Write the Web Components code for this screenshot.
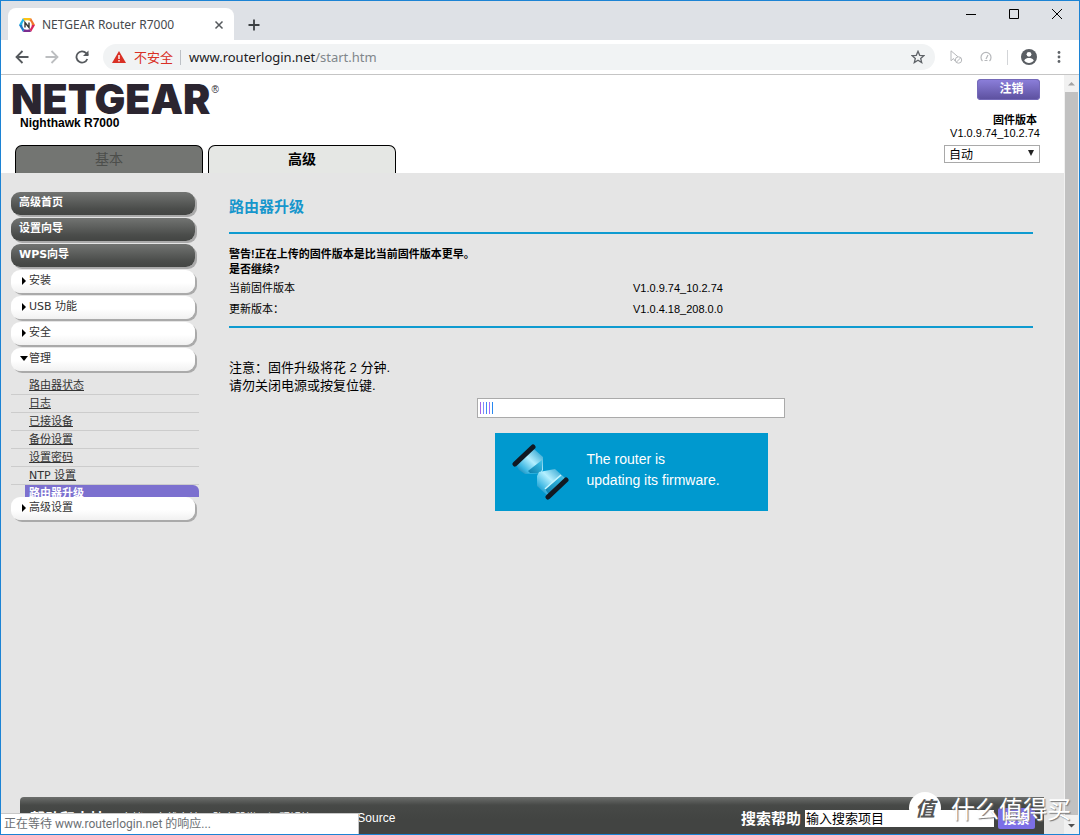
<!DOCTYPE html>
<html lang="zh-CN">
<head>
<meta charset="utf-8">
<title>NETGEAR Router R7000</title>
<style>
  html, body { height: 100%; margin: 0; }
  body { font: 12px/15px "Liberation Sans", "Noto Sans CJK SC", sans-serif; color: #000; overflow: hidden; }
</style>
</head>
<body>
<browser-window>
  <tab-strip slot="tabs" label="NETGEAR Router R7000"></tab-strip>
  <address-bar slot="toolbar" host="www.routerlogin.net" path="/start.htm"></address-bar>
  <router-page>
    <router-header slot="header"></router-header>
    <side-menu slot="menu">
      <menu-button tone="dark">高级首页</menu-button>
      <menu-button tone="dark">设置向导</menu-button>
      <menu-button tone="dark">WPS向导</menu-button>
      <menu-button arrow="right">安装</menu-button>
      <menu-button arrow="right">USB 功能</menu-button>
      <menu-button arrow="right">安全</menu-button>
      <menu-button arrow="down">管理</menu-button>
      <sub-menu></sub-menu>
      <menu-button arrow="right">高级设置</menu-button>
    </side-menu>
    <upgrade-panel></upgrade-panel>
    <help-footer slot="footer"></help-footer>
  </router-page>
  <status-bubble slot="status">正在等待 www.routerlogin.net 的响应...</status-bubble>
</browser-window>
<site-watermark></site-watermark>

<script>
const define = (name, html) => customElements.define(name, class extends HTMLElement {
  constructor() {
    super();
    const t = document.createElement('template');
    t.innerHTML = typeof html === 'function' ? html(this) : html;
    this.attachShadow({ mode: 'open' }).append(t.content.cloneNode(true));
  }
});

define('browser-window', `
<style>
  :host { display: flex; flex-direction: column; position: relative; height: 100%; box-sizing: border-box; border: 1px solid #1c83d4; background: #fff; }
  .view { flex: 1; min-height: 0; display: flex; border-top: 1px solid #c5c5c5; }
  .content { flex: 1; min-width: 0; display: flex; }
  .bar { width: 15px; background: #f1f1f1; display: flex; flex-direction: column; align-items: center; }
  .bar svg { width: 15px; height: 17px; }
  .thumb { width: 13px; flex: 1; background: #c1c1c1; }
  .rest { height: 2px; }
  .status { position: absolute; left: 0; bottom: 0; }
</style>
<slot name="tabs"></slot>
<slot name="toolbar"></slot>
<div class="view">
  <div class="content"><slot></slot></div>
  <div class="bar">
    <svg viewBox="0 0 15 17"><path d="M4 10.500 7.500 7 11 10.500z" fill="#a3a3a3"/></svg>
    <div class="thumb"></div><div class="rest"></div>
    <svg viewBox="0 0 15 17"><path d="M4 7 7.500 10.500 11 7z" fill="#505050"/></svg>
  </div>
</div>
<div class="status"><slot name="status"></slot></div>`);

define('tab-strip', el => `
<style>
  :host { display: flex; height: 39px; flex: none; background: #dee1e6; font: 12px/16px "Noto Sans", sans-serif; color: #45494d; }
  .tab { display: flex; align-items: center; box-sizing: border-box; width: 226px; height: 32px; margin: 7px 0 0 7px; padding: 2px 10px 0 11px; gap: 7px; background: #fff; border-radius: 8px 8px 0 0; }
  .tab span { flex: 1; }
  button { border: 0; padding: 0; background: none; display: grid; place-items: center; }
  .new { width: 40px; height: 47px; }
  .win { margin: 0 1px 0 auto; display: flex; }
  .win button { width: 43px; height: 26px; }
</style>
<div class="tab">
  <svg width="16" height="16" viewBox="0 0 16 16"><path d="M4 1 8 8 0 8z" fill="#20b4e8"/><path d="M0 8h8l-4 7z" fill="#1e78c8"/><path d="M4 1h8L8 8z" fill="#fbc318"/><path d="M12 1l4 7H8z" fill="#f0742c"/><path d="M16 8l-4 7-4-7z" fill="#d8255d"/><path d="M12 15H4l4-7z" fill="#7b2d90"/><circle cx="8" cy="8" r="4.800" fill="#fff"/><path d="M6 10.500v-5l4 5v-5" fill="none" stroke="#333" stroke-width="1.400"/></svg>
  <span>${el.getAttribute('label')}</span>
  <button aria-label="关闭标签页"><svg width="10" height="10" viewBox="0 0 10 10"><path d="M1.500 1.500l7 7m0-7l-7 7" stroke="#55595d" stroke-width="1.500"/></svg></button>
</div>
<button class="new" aria-label="新标签页"><svg width="12" height="12" viewBox="0 0 12 12"><path d="M6 .5v11M.5 6h11" stroke="#3c4043" stroke-width="1.800"/></svg></button>
<div class="win">
  <button aria-label="最小化"><svg width="10" height="10" viewBox="0 0 10 10"><path d="M0 5.500h10" stroke="#000"/></svg></button>
  <button aria-label="最大化"><svg width="10" height="10" viewBox="0 0 10 10"><path d="M.5.5h9v9h-9z" fill="none" stroke="#000"/></svg></button>
  <button aria-label="关闭"><svg width="10" height="10" viewBox="0 0 10 10"><path d="M0 0l10 10m0-10L0 10" stroke="#000"/></svg></button>
</div>`);

define('address-bar', el => `
<style>
  :host { display: flex; align-items: center; height: 34px; flex: none; padding: 0 12px; background: #fff; font: 13px/20px "Noto Sans", "Noto Sans CJK SC", sans-serif; }
  button { border: 0; padding: 0; background: none; display: grid; place-items: center; width: 30px; height: 28px; }
  .nav { display: flex; margin-right: 6px; margin-left: -6px; }
  .box { flex: 1; display: flex; align-items: center; height: 26px; border-radius: 13px; background: #f1f3f4; padding: 0 2px 0 9px; white-space: nowrap; }
  .warn { color: #d93025; margin: 0 7px 0 8px; }
  .sep { width: 1px; height: 15px; background: #bdc1c6; margin-right: 8px; }
  .url { flex: 1; color: #202124; } .url i { font-style: normal; color: #80868b; }
  .tools { display: flex; align-items: center; margin: 0 -7px 0 6px; }
  .line { width: 1px; height: 15px; background: #d3d5d8; margin: 0 6px; }
</style>
<div class="nav">
  <button aria-label="后退"><svg width="14" height="14" viewBox="0 0 14 14"><path d="M13.500 7H1.500M7.500 1 1.500 7l6 6" fill="none" stroke="#55595d" stroke-width="1.800"/></svg></button>
  <button aria-label="前进"><svg width="14" height="14" viewBox="0 0 14 14"><path d="M.5 7h12M6.500 1l6 6-6 6" fill="none" stroke="#bcbec0" stroke-width="1.800"/></svg></button>
  <button aria-label="重新加载"><svg width="14" height="14" viewBox="0 0 14 14"><path d="M12.300 9A5.600 5.600 0 1 1 11.200 3.200L13 5" fill="none" stroke="#55595d" stroke-width="1.800"/><path d="M13.500.5v5.500H8z" fill="#55595d"/></svg></button>
</div>
<div class="box">
  <svg width="14" height="12" viewBox="0 0 14 12"><path d="M7 0l7 12H0z" fill="#d93025"/><path d="M6.300 4h1.400v4H6.300zM6.300 9h1.400v1.400H6.300z" fill="#fff"/></svg>
  <span class="warn">不安全</span><span class="sep"></span>
  <span class="url">${el.getAttribute('host')}<i>${el.getAttribute('path')}</i></span>
  <button aria-label="收藏"><svg width="14" height="14" viewBox="0 0 14 14"><path d="M7 1.300l1.700 4 4.200.3-3.200 2.800 1 4.200L7 10.300l-3.700 2.300 1-4.200L1.100 5.600l4.200-.3z" fill="none" stroke="#5f6368" stroke-width="1.300"/></svg></button>
</div>
<div class="tools">
  <button aria-label="扩展一"><svg width="14" height="14" viewBox="0 0 14 14"><path d="M2 .8v10l2.500-2.300L6 11M2 .8l7 6" fill="none" stroke="#b6b8bb"/><circle cx="9.500" cy="10" r="3.200" fill="none" stroke="#b6b8bb"/><path d="M7.500 12l4-4" stroke="#b6b8bb"/></svg></button>
  <button aria-label="扩展二"><svg width="12" height="12" viewBox="0 0 12 12"><path d="M2.500 10a5 5 0 1 1 7 0M6 8l2-4M4.500 9.500h3" fill="none" stroke="#b6b8bb" stroke-width="1.200"/></svg></button>
  <span class="line"></span>
  <button aria-label="个人资料"><svg width="16" height="16" viewBox="0 0 16 16"><circle cx="8" cy="8" r="8" fill="#5a5e63"/><circle cx="8" cy="5.300" r="2.400" fill="#fff"/><path d="M3.200 11.500C4 9.600 6.300 9 8 9s4 .6 4.800 2.500C11.700 13.100 10 14 8 14s-3.700-.9-4.800-2.500z" fill="#fff"/></svg></button>
  <button aria-label="菜单"><svg width="4" height="12" viewBox="0 0 4 12"><g fill="#5f6368"><circle cx="2" cy="1.500" r="1.400"/><circle cx="2" cy="6" r="1.400"/><circle cx="2" cy="10.500" r="1.400"/></g></svg></button>
</div>`);

define('router-page', `
<style>
  :host { flex: 1; min-width: 0; display: flex; flex-direction: column; background: #e5e5e5; }
  .body { flex: 1; min-height: 0; display: grid; grid-template-columns: 188px 1fr; column-gap: 30px; padding: 19px 31px 0 10px; align-items: start; }
</style>
<slot name="header"></slot>
<div class="body"><slot name="menu"></slot><slot></slot></div>
<slot name="footer"></slot>`);

define('router-header', `
<style>
  :host { display: flex; justify-content: space-between; height: 98px; background: #fff; padding: 0 24px 0 14px; }
  .left { display: flex; flex-direction: column; justify-content: space-between; }
  .logo { font: 900 41px/40px Inter, sans-serif; color: #2b2530; display: flex; align-items: flex-start; margin: 4px 0 0 -4px; height: 36px; }
  .logo sup { font: 10px/12px "Liberation Sans", sans-serif; margin: 5px 0 0 1px; }
  .model { font-weight: bold; margin: 0 5px; line-height: 16px; }
  nav { display: flex; gap: 5px; margin-top: auto; }
  a { box-sizing: border-box; width: 188px; height: 28px; border: 1px solid #000; border-bottom: 0; border-radius: 7px 7px 0 0; text-align: center; font: bold 14px/24px "Noto Sans CJK SC", sans-serif; text-decoration: none; background: #737572; color: #4c4e4b; }
  a.off { font-weight: normal; }
  a.on { background: #e5e7e4; color: #000; }
  .right { display: flex; flex-direction: column; align-items: flex-end; padding-top: 4px; }
  button { width: 63px; height: 21px; border: 0; border-radius: 4px; background: linear-gradient(#8d80dc, #5b4f9d); box-shadow: inset 0 0 0 1px #756ab8; color: #fff; font: bold 12px/18px "Noto Sans CJK SC", sans-serif; padding: 0 0 3px 6px; }
  b { font: bold 11px/14px "Noto Sans CJK SC", sans-serif; margin: 12px 3px 0 0; }
  .version { font-size: 11px; }
  select { appearance: none; width: 96px; height: 18px; box-sizing: border-box; border: 1px solid #a9a9a9; border-radius: 0; padding: 0 4px; font: 12px/16px "Noto Sans CJK SC", sans-serif; color: #000; background: linear-gradient(#0000, #0000); }
  .pick { position: relative; display: flex; margin-top: 4px; }
  .pick svg { position: absolute; right: 6px; top: 5px; pointer-events: none; }
</style>
<div class="left">
  <div class="logo">NETGEAR<sup>®</sup></div>
  <div class="model">Nighthawk R7000</div>
  <nav><a class="off" href="#basic">基本</a><a class="on" href="#advanced">高级</a></nav>
</div>
<div class="right">
  <button>注销</button>
  <b>固件版本</b>
  <span class="version">V1.0.9.74_10.2.74</span>
  <div class="pick"><select aria-label="语言"><option>自动</option></select><svg width="6" height="6" viewBox="0 0 6 6"><path d="M0 0h6L3 6z" fill="#222"/></svg></div>
</div>`);

define('side-menu', `
<style>:host { display: flex; flex-direction: column; }</style><slot></slot>`);

define('menu-button', el => {
  const arrow = el.getAttribute('arrow');
  const d = arrow === 'down' ? 'M0 1h8L4 6z' : 'M2 0v8l4-4z';
  return `
<style>
  :host { display: block; height: 26px; width: 186px; }
  button { display: flex; align-items: center; box-sizing: border-box; width: 184px; height: 23px; padding: 0 9px 1px; border: 0; border-radius: 9px; background: linear-gradient(#fff 55%, #f1f1f1); box-shadow: 2px 2px 0 #aaa; color: #333; font: 11px/22px "DejaVu Sans", "Noto Sans CJK SC", sans-serif; white-space: pre; }
  :host([tone="dark"]) button { background: linear-gradient(#727472, #4a4c4a 75%, #434543); color: #fff; font-weight: bold; padding-left: 8px; }
  svg { margin-right: 1px; }
</style>
<button>${arrow ? `<svg width="8" height="8" viewBox="0 0 8 8"><path d="${d}" fill="#000"/></svg>` : ''}<slot></slot></button>`;
});

define('sub-menu', `
<style>
  :host { display: block; padding-top: 3px; }
  ul { list-style: none; margin: 0; padding: 0; }
  li { box-sizing: border-box; height: 18px; padding-left: 18px; border-bottom: 1px solid #ccc; line-height: 17px; }
  a { color: #333; font: 11px/17px "DejaVu Sans", "Noto Sans CJK SC", sans-serif; }
  .cur { height: 12px; overflow: hidden; margin-left: 14px; padding-left: 4px; border: 0; background: #7c70cf; border-top-right-radius: 6px; }
  .cur a { display: block; color: #fff; font-weight: bold; }
</style>
<ul>
  <li><a href="#status">路由器状态</a></li><li><a href="#log">日志</a></li><li><a href="#devices">已接设备</a></li>
  <li><a href="#backup">备份设置</a></li><li><a href="#password">设置密码</a></li><li><a href="#ntp">NTP 设置</a></li>
  <li class="cur"><a href="#upgrade">路由器升级</a></li>
</ul>`);

define('upgrade-panel', `
<style>
  :host { display: block; }
  h1 { margin: 0; height: 40px; border-bottom: 2px solid #0f9bd0; color: #1696cc; font: bold 15px/28px "Noto Sans CJK SC", sans-serif; }
  .warn { margin: 13px 0 0; font: bold 11px/15px "Liberation Sans", "Noto Sans CJK SC", sans-serif; }
  table { width: 100%; border-collapse: collapse; table-layout: fixed; }
  th, td { height: 21px; padding: 0; text-align: left; font-weight: normal; font-size: 11px; line-height: 16px; }
  td { padding-left: 2px; }
  .rule { border-top: 2px solid #0f9bd0; margin-top: 7px; }
  .note { margin: 31px 0 3px; font-size: 13px; line-height: 18px; }
  .center { display: flex; flex-direction: column; align-items: center; gap: 15px; }
  .progress { box-sizing: border-box; width: 308px; height: 20px; border: 1px solid #aaa; background: #fff; display: flex; gap: 2px; padding: 3px 2px; }
  .progress i { width: 1px; height: 12px; }
  .banner { box-sizing: border-box; width: 273px; height: 78px; background: #0099cf; color: #fff; display: flex; align-items: center; gap: 18px; padding: 0 17px; font-size: 14px; line-height: 21px; }
  .banner p { margin: 0 0 4px; white-space: nowrap; }
</style>
<h1>路由器升级</h1>
<div class="warn">警告!正在上传的固件版本是比当前固件版本更早。<br>是否继续?</div>
<table><tr><th scope="row">当前固件版本</th><td>V1.0.9.74_10.2.74</td></tr><tr><th scope="row">更新版本：</th><td>V1.0.4.18_208.0.0</td></tr></table>
<div class="rule"></div>
<div class="note">注意：固件升级将花 2 分钟.<br>请勿关闭电源或按复位键.</div>
<div class="center">
  <div class="progress" role="progressbar" aria-label="升级进度"><i style="background:#a466e8"></i><i style="background:#7f8cff"></i><i style="background:#3f8cf0"></i><i style="background:#a06cff"></i><i style="background:#2888f0"></i></div>
  <div class="banner">
    <svg width="57" height="57" viewBox="0 0 57 57">
      <defs>
        <linearGradient id="g" x1="0" y1="1" x2="1" y2="0"><stop offset="0" stop-color="#0b6c98"/><stop offset=".25" stop-color="#3bb6e2"/><stop offset=".55" stop-color="#b4efff"/><stop offset="1" stop-color="#1593c4"/></linearGradient>
        <linearGradient id="s" x1="0" y1="1" x2="1" y2="0"><stop offset="0" stop-color="#0a7dab"/><stop offset="1" stop-color="#3fc3ea"/></linearGradient>
      </defs>
      <path d="M4 21 22 5 31 13 31 26 29 29 13 30 7 26z" fill="url(#g)"/>
      <path d="M16 27 30 16 30 26 28 29 18 29z" fill="url(#s)"/>
      <path d="M27 28 43 25 53 34 36 52 25 42 25 32z" fill="url(#g)"/>
      <path d="M33 45 49 32 53 36 37 51z" fill="url(#s)"/><path d="M33 45 49 31" stroke="#c9f7ff" stroke-width="1.500"/>
      <path d="M3 20 21 3" stroke="#111922" stroke-width="5" stroke-linecap="round"/><path d="M36 53 54 36" stroke="#111922" stroke-width="5" stroke-linecap="round"/>
    </svg>
    <p>The router is<br>updating its firmware.</p>
  </div>
</div>`);

define('help-footer', `
<style>
  :host { display: flex; align-items: center; box-sizing: border-box; height: 37px; flex: none; margin: 0 20px 0 19px; padding: 5px 9px 0 10px; border-radius: 4px 0 0 0; background: linear-gradient(#6c6e6c, #474947 22%, #424442 60%); color: #fff; white-space: nowrap; overflow: hidden; }
  strong { font: bold 15px/20px "Noto Sans CJK SC", sans-serif; margin-right: 16px; }
  nav { flex: 1; display: flex; gap: 5px; font: 11px/20px "Liberation Sans", "Noto Sans CJK SC", sans-serif; }
  a { color: inherit; text-decoration: none; }
  .en { font-size: 12px; }
  form { display: flex; align-items: center; gap: 4px; }
  label { font: bold 15px/20px "Noto Sans CJK SC", sans-serif; }
  input { box-sizing: border-box; width: 189px; height: 17px; border: 0; padding: 0 1px; background: #fff; font: 13px/17px "Liberation Sans", "Noto Sans CJK SC", sans-serif; color: #000; }
  button { width: 37px; height: 21px; border: 0; border-radius: 2px; background: #7c6fe6; color: #fff; padding: 0; font: bold 13px/20px "Noto Sans CJK SC", sans-serif; }
</style>
<strong>帮助和支持</strong>
<nav><a href="#docs">文档</a>|<a href="#support">在线支持</a>|<a href="#faq">路由器常见问题解答</a>|<a class="en" href="#source">Open Source</a></nav>
<form><label for="q">搜索帮助</label><input id="q" value="输入搜索项目"><button type="button">搜索</button></form>`);

define('status-bubble', `
<style>
  :host { display: block; box-sizing: border-box; width: 358px; height: 21px; padding: 0 3px; background: #fff; border-top: 1px solid #c8c8c8; border-right: 1px solid #c8c8c8; color: #6b6f73; font: 12px/20px Roboto, "Noto Sans CJK SC", sans-serif; white-space: nowrap; }
</style><slot></slot>`);

define('site-watermark', `
<style>
  :host { position: absolute; right: 9px; bottom: 9px; display: flex; align-items: center; gap: 10px; pointer-events: none; color: #fff; font: 24px/36px "Noto Sans CJK SC", sans-serif; white-space: nowrap; text-shadow: 1px 1px 1px #777; }
  .disc { width: 32px; height: 32px; border-radius: 50%; background: #fff; color: #555; font: italic bold 20px/32px "Noto Sans CJK SC", sans-serif; text-align: center; text-shadow: none; }
</style>
<span class="disc">值</span><span>什么值得买</span>`);
</script>
</body>
</html>
